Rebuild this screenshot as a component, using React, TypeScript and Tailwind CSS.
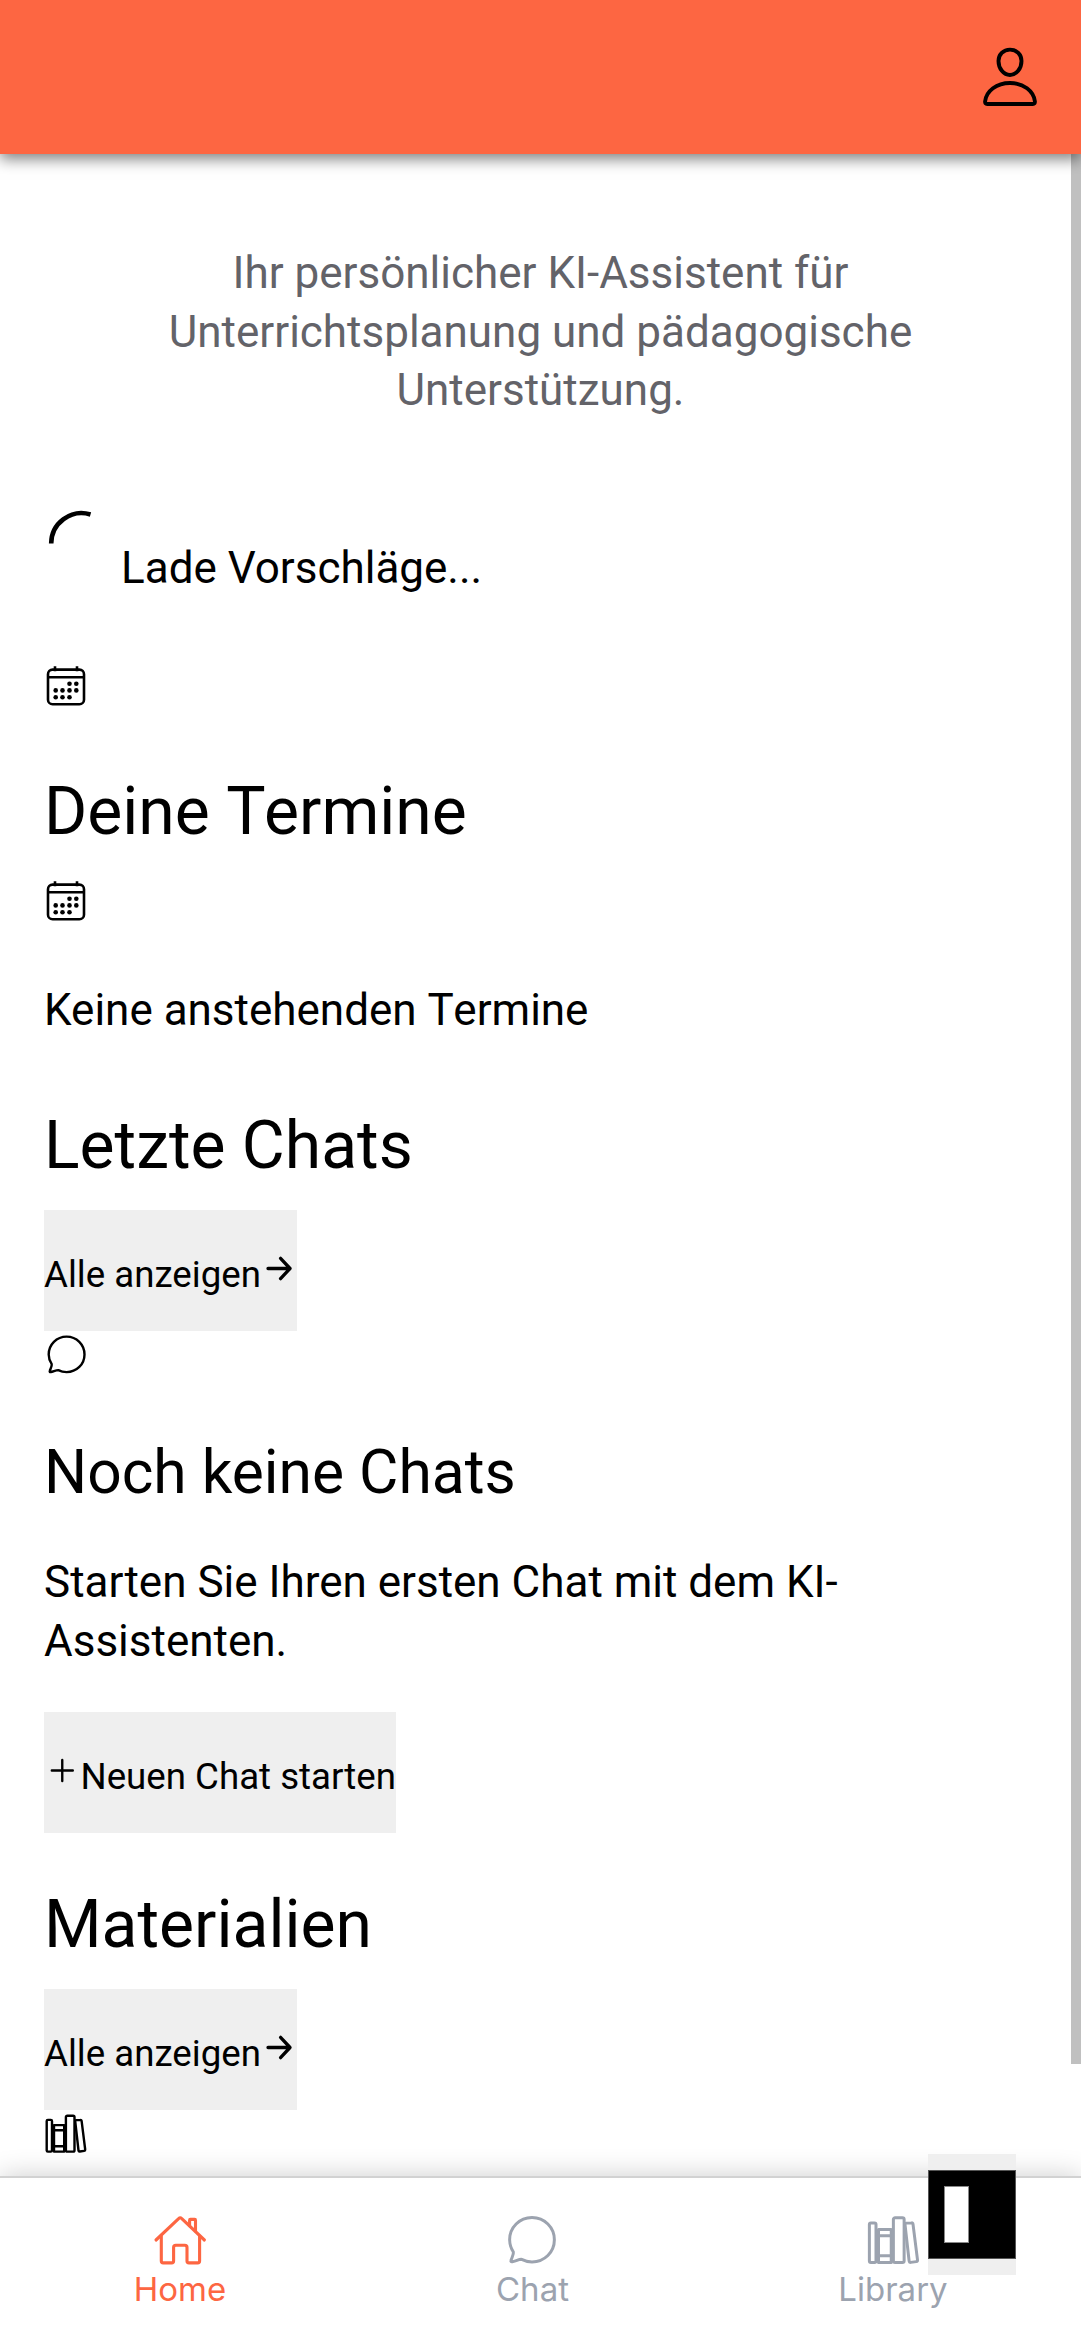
import type { ReactNode } from "react";

type IconProps = { className?: string };

function Person({ className }: IconProps) {
  return (
    <svg viewBox="0 0 66 66" fill="none" stroke="currentColor" strokeWidth="3.9" strokeLinejoin="round" className={className}>
      <path d="M33 5.6c6.7 0 11.5 5 11.5 11.4C44.500 24.600 39.400 31 33 31S21.500 24.600 21.500 17C21.500 10.600 26.300 5.600 33 5.600Z" />
      <path d="M10.200 60C8.600 60 8 59 8.100 57.400C9.300 47 19.600 39 33 39s23.700 8 24.900 18.400C58 59 57.400 60 55.800 60Z" />
    </svg>
  );
}

function Calendar({ className }: IconProps) {
  const dots = [
    [25.5, 19.7], [32.3, 19.7],
    [11.7, 26.4], [18.5, 26.4], [25.5, 26.4], [32.3, 26.4],
    [11.7, 33.3], [18.5, 33.3], [25.5, 33.3],
  ];
  return (
    <svg viewBox="0 0 44 44" fill="none" stroke="currentColor" strokeWidth="2.6" className={className}>
      <rect x="4" y="5.6" width="36" height="34.7" rx="4.600" />
      <path d="M4 13.3h36M11 2.200v5M33 2.200v5" />
      <g fill="currentColor" stroke="none">
        {dots.map(([x, y]) => (
          <circle key={`${x}-${y}`} cx={x} cy={y} r="2.3" />
        ))}
      </g>
    </svg>
  );
}

function Bubble({ className }: IconProps) {
  return (
    <svg viewBox="0 0 44 44" fill="none" stroke="currentColor" strokeWidth="2.4" strokeLinejoin="round" className={className}>
      <path d="M21.6 3.6C31.600 3.600 39.500 11.500 39.500 21.400S31.600 39.100 21.600 39.100C18.400 39.100 15.800 38.400 13.300 37.100C12.200 36.700 8.200 38.500 5.800 39C4.900 39.200 4.500 38.800 4.800 37.900C5.300 36 7.100 33.200 6.700 31.200C5 28.600 3.700 25.500 3.700 21.400C3.700 11.500 11.600 3.600 21.600 3.600Z" />
    </svg>
  );
}

function Books({ className }: IconProps) {
  return (
    <svg viewBox="0 0 44 44" fill="none" stroke="currentColor" strokeWidth="2.4" strokeLinejoin="round" className={className}>
      <rect x="2.700" y="7.900" width="5.300" height="31.700" rx="1.200" />
      <path d="M10 13.100V39.600H20.200V13.100ZM10 18.200H20.200M10 34.200H20.200" />
      <rect x="21.900" y="3.800" width="8.600" height="35.800" rx="1.400" />
      <path d="M31.200 9.200C31.100 8.500 31.500 8.200 32.200 8.100L36.400 7.900C37.100 7.800 37.500 8.200 37.600 8.900L41.200 37.500C41.300 38.300 40.900 38.800 40.200 38.900L35.800 39.500C35.100 39.600 34.600 39.200 34.500 38.500Z" />
    </svg>
  );
}

function House({ className }: IconProps) {
  return (
    <svg viewBox="0 0 55 55" fill="none" stroke="currentColor" strokeWidth="3.1" strokeLinejoin="round" strokeLinecap="round" className={className}>
      <path d="M3 27 25.900 5.300c.8-.8 1.800-.8 2.600 0L51.400 27" />
      <path d="M8.300 23V48c0 1.300.6 1.900 1.900 1.900h8.500c1.300 0 1.900-.6 1.900-1.900V34.400c0-1.400.7-2.100 2.200-2.100h9c1.500 0 2.200.7 2.200 2.100V48c0 1.300.6 1.900 1.900 1.900h8.800c1.300 0 1.900-.6 1.900-1.900V23" />
      <path d="M36.600 12.800V7.200c0-.5.300-.8.800-.8h4.300c.5 0 .8.300.8.800V18" />
    </svg>
  );
}

function Arrow() {
  return (
    <svg viewBox="0 0 37 37" fill="none" stroke="currentColor" strokeWidth="3.4" strokeLinecap="round" strokeLinejoin="round" className="mb-1 size-[37px]">
      <path d="M7.200 18.500h22M20.100 8.100 29.800 18.500 20.100 28.900" />
    </svg>
  );
}

function Plus() {
  return (
    <svg viewBox="0 0 37 37" fill="none" stroke="currentColor" strokeWidth="2.4" strokeLinecap="round" className="mb-1 size-[37px]">
      <path d="M7.900 18.500h21.300M18.500 7.900v21.300" />
    </svg>
  );
}

function GreyButton({ children, className }: { children: ReactNode; className: string }) {
  return (
    <button className={`flex h-[121px] items-center whitespace-nowrap bg-[#efefef] text-[36.670px] leading-[49px] ${className}`}>
      {children}
    </button>
  );
}

function Tab({ label, icon, className }: { label: string; icon: ReactNode; className: string }) {
  return (
    <a className={`flex flex-col items-center gap-px font-['Inter',sans-serif] text-[33px] leading-[40px] ${className}`}>
      {icon}
      <span>{label}</span>
    </a>
  );
}

export default function App() {
  return (
    <div className="relative flex h-[2340px] w-[1081px] flex-col overflow-hidden bg-white font-['Roboto',sans-serif] text-[44px] leading-[58px] text-black">
      <header className="relative z-10 flex h-[154px] shrink-0 items-center justify-end bg-[#fd6642] pr-[38px] shadow-[0_5px_14px_rgba(0,0,0,0.5)]">
        <Person className="size-[66px]" />
      </header>

      <div className="flex min-h-0 flex-1 justify-between">
        <main className="flex w-[993px] flex-col items-start pl-[44px]">
          <p className="mt-[90.1px] w-[993px] px-[88px] text-center leading-[58.667px] text-[#636369]">
            Ihr persönlicher KI-Assistent für
            <br />
            Unterrichtsplanung und pädagogische
            <br />
            Unterstützung.
          </p>

          <div className="mt-[89.5px] flex h-[88px]">
            <svg viewBox="0 0 77 77" fill="none" stroke="currentColor" strokeWidth="4.6" className="size-[77px]">
              <path d="M7.200 33.500A30.500 30.500 0 0 1 46.500 4.500" />
            </svg>
            <span className="pt-[29.4px]">Lade Vorschläge...</span>
          </div>

          <Calendar className="mt-[66.4px] size-[44px]" />
          <h2 className="mt-[60px] text-[66px] leading-[87px]">
            Deine <span className="tracking-[-1.5px]">T</span>ermine
          </h2>
          <Calendar className="mt-[24px] size-[44px]" />
          <p className="mt-[58px]">
            Keine anstehenden <span className="tracking-[-0.5px]">T</span>ermine
          </p>

          <h2 className="mt-[63px] text-[66px] leading-[87px]">Letzte Chats</h2>
          <GreyButton className="mt-[21px] w-[253px]">
            <span className="pt-[8px]">Alle anzeigen</span>
            <Arrow />
          </GreyButton>
          <Bubble className="ml-[0.5px] mt-[1.5px] size-[44px]" />
          <h3 className="mt-[55px] text-[60.5px] leading-[81px]">Noch keine Chats</h3>
          <p className="mt-[40.5px] leading-[58.667px]">
            Starten Sie Ihren ersten Chat mit dem KI-
            <br />
            Assistenten.
          </p>
          <GreyButton className="mt-[42px] w-[352px]">
            <Plus />
            <span className="pt-[8px]">Neuen Chat starten</span>
          </GreyButton>

          <h2 className="mt-[47.7px] text-[66px] leading-[87px]">Materialien</h2>
          <GreyButton className="mt-[21.3px] w-[253px]">
            <span className="pt-[8px]">Alle anzeigen</span>
            <Arrow />
          </GreyButton>
          <Books className="mt-[2px] size-[44px] shrink-0" />
        </main>
        <div className="h-[1910px] w-[10px] bg-[#c0c0c0]" />
      </div>

      <nav className="relative z-10 flex h-[164px] shrink-0 border-t-2 border-[#d2d2d2] bg-white pt-[35px] text-[#9ca3af] shadow-[0_0_26px_rgba(0,0,0,0.2)]">
        <Tab label="Home" icon={<House className="size-[55px]" />} className="w-[360px] text-[#fd6642]" />
        <Tab label="Chat" icon={<Bubble className="size-[55px]" />} className="w-[345px]" />
        <Tab label="Library" icon={<Books className="size-[55px]" />} className="w-[376px]" />
      </nav>

      <button className="absolute left-[927.6px] top-[2154px] z-20 flex h-[121px] w-[88px] items-center bg-[#efefef]">
        <span className="flex h-[89px] w-[88px] items-center border border-[#555] bg-black pl-[15px]">
          <span className="h-[57px] w-[25px] border border-[#888] bg-white" />
        </span>
      </button>
    </div>
  );
}
